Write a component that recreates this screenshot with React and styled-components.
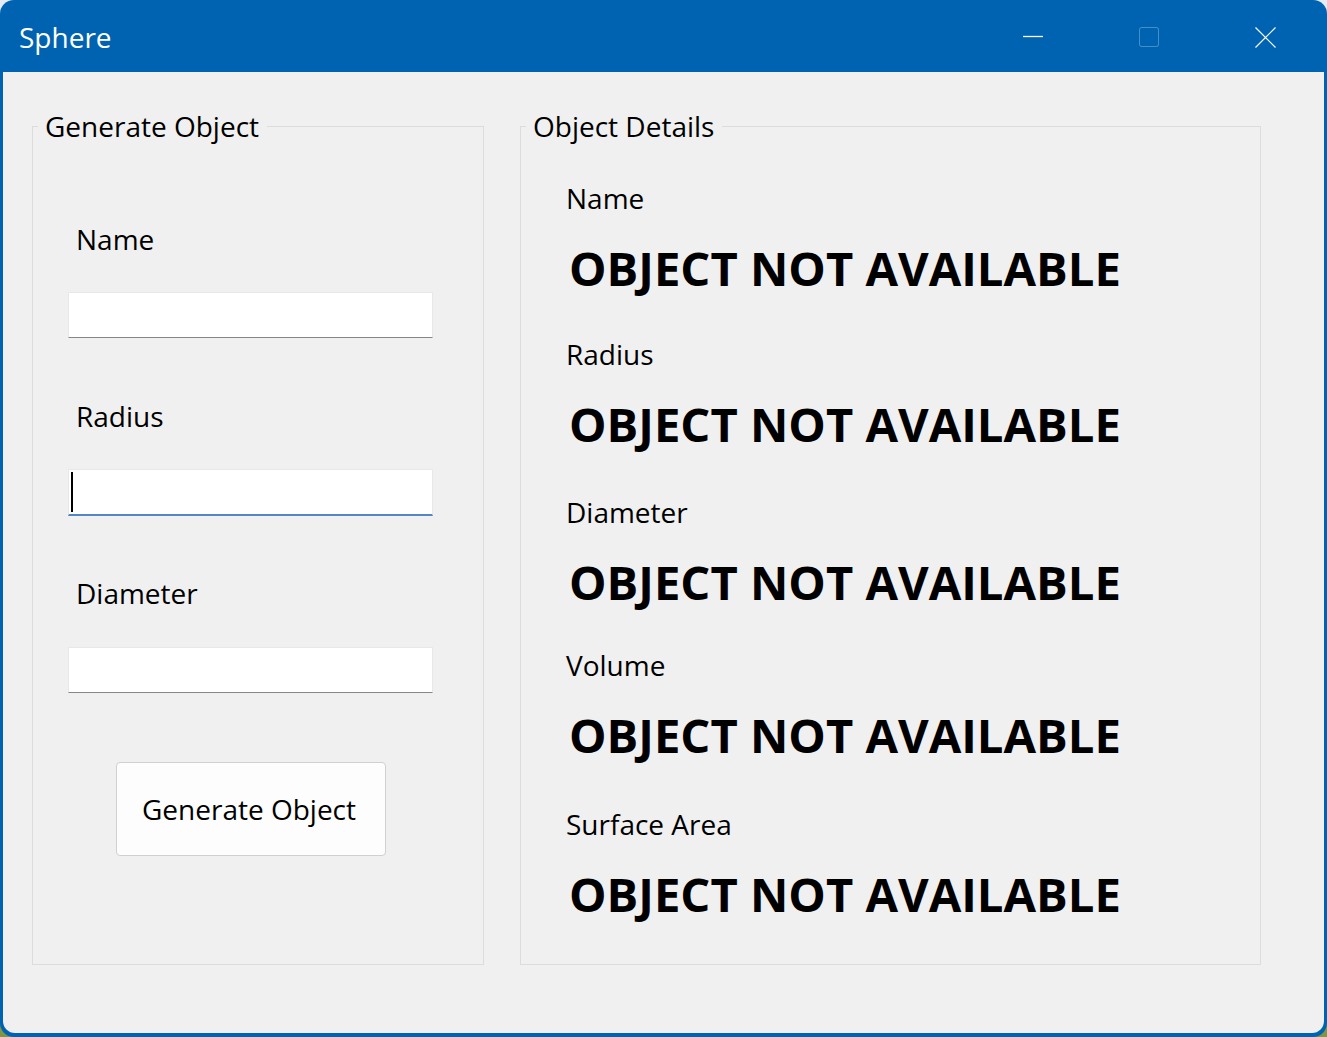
import styled, { createGlobalStyle } from "styled-components";

const GlobalStyle = createGlobalStyle`
  html, body {
    margin: 0;
    padding: 0;
    background: linear-gradient(#e4edf6 0%, #dfe8f1 40%, #7f9645 100%);
  }
  * {
    box-sizing: border-box;
  }
`;

const Window = styled.div`
  display: flex;
  flex-direction: column;
  width: 1327px;
  height: 1037px;
  border-radius: 14px;
  overflow: hidden;
  background-color: #0063b1;
  font-family: "Open Sans", "Noto Sans", sans-serif;
  color: #000000;
`;

const TitleBar = styled.div`
  display: flex;
  flex-direction: row;
  align-items: center;
  height: 72px;
  padding: 2px 4px 0 19px;
  flex-shrink: 0;
`;

const Title = styled.span`
  flex: 1;
  font-size: 28px;
  line-height: 38px;
  color: #ffffff;
`;

const ControlButton = styled.div`
  display: flex;
  align-items: center;
  justify-content: center;
  width: 116px;
  height: 70px;
`;

const Body = styled.div`
  flex: 1;
  display: flex;
  flex-direction: row;
  align-items: flex-start;
  gap: 36px;
  margin: 0 3px 4px 3px;
  padding: 35px 0 0 29px;
  background-color: #f0f0f0;
  border-radius: 0 0 12px 12px;
`;

const GroupBox = styled.fieldset`
  width: ${(p) => p.$width}px;
  margin: 0;
  padding: 0;
  border: 1px solid #dcdcdc;
  min-width: 0;
`;

const Legend = styled.legend`
  margin-left: 5px;
  padding: 0 8px 0 7px;
  font-size: 28px;
  line-height: 38px;
`;

const InputPane = styled.div`
  display: flex;
  flex-direction: column;
  height: 819px;
  padding-left: 35px;
`;

const Field = styled.div`
  display: flex;
  flex-direction: column;
  gap: ${(p) => p.$gap}px;
  margin-top: ${(p) => p.$top}px;
`;

const FieldLabel = styled.span`
  margin-left: 8px;
  font-size: 28px;
  line-height: 38px;
`;

const TextBox = styled.div`
  position: relative;
  width: 365px;
  height: ${(p) => (p.$focused ? 47 : 46)}px;
  background-color: #ffffff;
  border: 1px solid #e8e8e8;
  border-bottom: ${(p) => (p.$focused ? "2px solid #5286c4" : "1px solid #868686")};
`;

const Caret = styled.span`
  position: absolute;
  left: 2px;
  top: 2px;
  width: 2px;
  height: 40px;
  background-color: #000000;
`;

const ActionButton = styled.button`
  width: 270px;
  height: 94px;
  margin: 69px 0 0 48px;
  padding: 0 4px 0 0;
  background-color: #fdfdfd;
  border: 1px solid #d0d0d0;
  border-radius: 4px;
  font-family: "Open Sans", "Noto Sans", sans-serif;
  font-size: 28px;
  line-height: 38px;
  color: #000000;
`;

const DetailsPane = styled.div`
  display: flex;
  flex-direction: column;
  height: 819px;
  padding-left: 45px;
`;

const DetailField = styled.div`
  display: flex;
  flex-direction: column;
  gap: 19px;
  margin-top: ${(p) => p.$top}px;
`;

const DetailLabel = styled.span`
  font-size: 28px;
  line-height: 38px;
`;

const DetailValue = styled.span`
  margin-left: 3px;
  font-size: 47.2px;
  font-weight: 700;
  line-height: 64px;
  white-space: nowrap;
`;

const inputs = [
  { label: "Name", top: 75, gap: 34 },
  { label: "Radius", top: 59, gap: 34, focused: true },
  { label: "Diameter", top: 58, gap: 35 },
];

const details = [
  { label: "Name", top: 34 },
  { label: "Radius", top: 35 },
  { label: "Diameter", top: 37 },
  { label: "Volume", top: 32 },
  { label: "Surface Area", top: 38 },
];

const App = function () {
  return (
    <>
      <GlobalStyle />
      <Window>
        <TitleBar>
          <Title>Sphere</Title>
          <ControlButton>
            <svg width="20" height="20" viewBox="0 0 20 20">
              <line x1="0" y1="9.5" x2="20" y2="9.5" stroke="#ffffff" strokeWidth="1.3" />
            </svg>
          </ControlButton>
          <ControlButton>
            <svg width="20" height="20" viewBox="0 0 20 20">
              <rect x="0.5" y="0.5" width="19" height="19" rx="2" fill="none" stroke="rgba(255,255,255,0.28)" strokeWidth="1" />
            </svg>
          </ControlButton>
          <ControlButton>
            <svg width="21" height="21" viewBox="0 0 21 21">
              <path d="M0.5 0.5 L20.5 20.5 M20.5 0.5 L0.5 20.5" stroke="#ffffff" strokeWidth="1.2" fill="none" />
            </svg>
          </ControlButton>
        </TitleBar>
        <Body>
          <GroupBox $width={452}>
            <Legend>Generate Object</Legend>
            <InputPane>
              {inputs.map((f) => (
                <Field key={f.label} $top={f.top} $gap={f.gap}>
                  <FieldLabel>{f.label}</FieldLabel>
                  <TextBox $focused={f.focused}>{f.focused && <Caret />}</TextBox>
                </Field>
              ))}
              <ActionButton>Generate Object</ActionButton>
            </InputPane>
          </GroupBox>
          <GroupBox $width={741}>
            <Legend>Object Details</Legend>
            <DetailsPane>
              {details.map((d) => (
                <DetailField key={d.label} $top={d.top}>
                  <DetailLabel>{d.label}</DetailLabel>
                  <DetailValue>OBJECT NOT AVAILABLE</DetailValue>
                </DetailField>
              ))}
            </DetailsPane>
          </GroupBox>
        </Body>
      </Window>
    </>
  );
};

export default App;
